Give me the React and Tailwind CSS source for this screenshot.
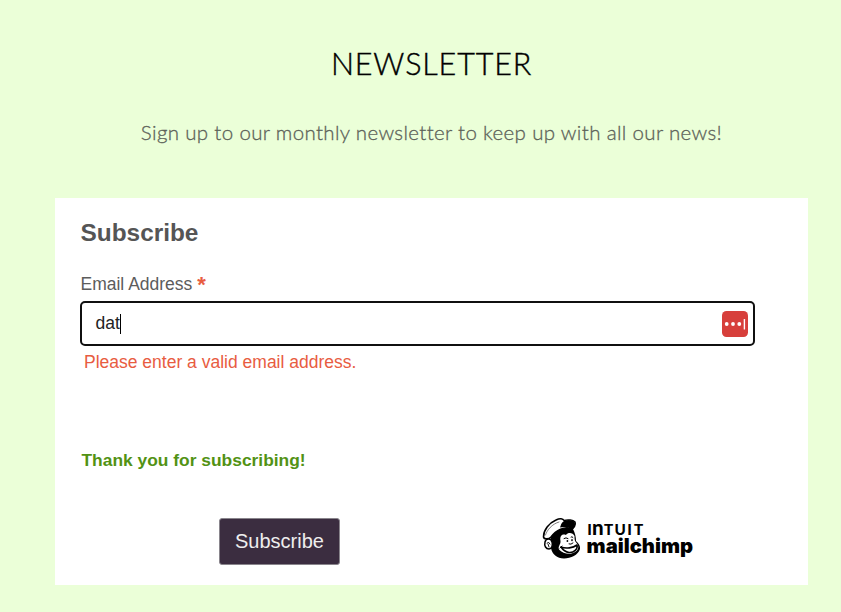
function Freddie() {
  return (
    <svg className="block h-[44px] w-[42px] shrink-0" viewBox="0 0 42 44" fill="none" strokeLinecap="round" strokeLinejoin="round">
      <path d="M12 18C14 13 19 10 25 11L32 13C34 17 35 21 35 25C38 28 39.5 30 39 33C37 39 30 42.5 23 42.5C16 42.5 11 38 10 32C8 28 9 22 12 18Z" fill="#000" />
      <path d="M19.5 25C18.5 20 21 17.5 25 19C27 16 32 16.5 33.5 20C33.5 23 33.5 25 35.5 27C38.5 30 37.5 34 34 36C30 39 22 38 18.5 34C16 31 20 28.5 19.5 25Z" fill="#fff" />
      <path d="M2.5 21C2.5 14 8 7 15 4C19 2 22 2.5 23 4.5C27 3.5 32 4 34 6C35 9 33 12.5 30 12.5C24 10 15 14 10 21C8 23.5 3 23.5 2.5 21Z" fill="#fff" stroke="#000" strokeWidth="1.6" />
      <path d="M23 5C27 3 32 4 33.5 6C35 9 33 13.5 31 13.5C27 10.5 23 10.5 19 11.5C20 9 20 7 23 5Z" fill="#000" />
      <path d="M4.5 19C6 14 11 8 18 6" stroke="#000" strokeWidth=".5" />
      <path d="M4 26C5 22 10 22 11 26C12 29 11 33 8 33C5 33 3 30 4 26Z" fill="#fff" stroke="#000" strokeWidth="1.5" />
      <path d="M6 27Q8 25 9 28M7 28L8 31" stroke="#000" strokeWidth=".9" />
      <path d="M23 22.5Q25 21 27 22.5M30 21Q31 20 32 21.5" stroke="#000" strokeWidth="1" />
      <ellipse cx="26.4" cy="25" rx=".9" ry="1.1" fill="#000" />
      <ellipse cx="31" cy="24.2" rx=".8" ry="1.1" fill="#000" />
      <path d="M28 28Q30 29 32 27" stroke="#000" strokeWidth="1" />
      <path d="M20 31C25 33 32 32 36 29C37 33 33 37 28 36.5C24 36 22 34 20 31Z" fill="#fff" stroke="#000" strokeWidth="1.6" />
      <path d="M19 32L21 30" stroke="#000" strokeWidth="1" />
    </svg>
  );
}

function MailchimpLogo() {
  return (
    <div className="flex">
      <Freddie />
      <svg className="block h-[44px] w-[112px]" viewBox="583 516 112 44" fill="#000">
        <text y="534.5" fontFamily="Lato, sans-serif" fontWeight="900" fontSize="15.2">
          <tspan x="587.2">I</tspan>
          <tspan x="592" fontSize="20.5">n</tspan>
          <tspan x="604 614.4 627.3 634">TUIT</tspan>
        </text>
        <text x="586.6" y="552.6" fontFamily="Inter, sans-serif" fontWeight="900" fontSize="20.2" textLength="106.4" lengthAdjust="spacingAndGlyphs">mailchimp</text>
      </svg>
    </div>
  );
}

function PasswordBadge() {
  return (
    <svg className="block size-[26px]" viewBox="0 0 26 26">
      <rect width="26" height="26" rx="4.5" fill="#d73f3b" />
      <g fill="#fff">
        <circle cx="4.7" cy="13" r="1.9" />
        <circle cx="11" cy="13" r="1.9" />
        <circle cx="17.3" cy="13" r="1.9" />
        <rect x="21.7" y="8" width="1.4" height="10.5" rx=".5" />
      </g>
    </svg>
  );
}

export default function App() {
  return (
    <main className="flex h-[612px] w-[841px] flex-col overflow-hidden bg-[#ebffd8] pl-[55px] font-['Liberation_Sans',Arial,sans-serif]">
      <header className="w-[753px] pt-[43px] text-center font-[Lato,sans-serif]">
        <h1 className="h-[40px] text-[30.5px] leading-[40px] font-light tracking-[0.85px] whitespace-nowrap text-black [-webkit-text-stroke:0.4px_#000]">NEWSLETTER</h1>
        <p className="mt-[34px] h-[30px] text-[20.5px] leading-[30px] font-light tracking-[0.34px] whitespace-nowrap text-[#5c6258] [-webkit-text-stroke:0.3px_#5c6258] [font-variant-ligatures:none]">Sign up to our monthly newsletter to keep up with all our news!</p>
      </header>
      <form className="mt-[51px] h-[387px] w-[753px] bg-white pt-[19px] pl-[25px]" onSubmit={(e) => e.preventDefault()}>
        <h2 className="ml-[0.5px] h-[32px] text-[24.4px] leading-[32px] font-bold text-[#555]">Subscribe</h2>
        <div className="mt-[23px] ml-[0.5px] flex h-[24px] gap-[5px] text-[17.5px] leading-[24px] text-[#5c5c5c]">
          <label>Email Address</label>
          <span className="text-[22px] leading-[26px] font-bold text-[#e85c41]">*</span>
        </div>
        <div className="mt-[5px] flex h-[45px] w-[675px] items-center rounded-[5px] border-2 border-[#101010] pr-[5px] pl-[13.5px] text-[17.5px] text-[#222]">
          <span>dat</span>
          <span className="h-[20px] w-px bg-black" />
          <span className="ml-auto"><PasswordBadge /></span>
        </div>
        <p className="mt-[4px] ml-[4px] h-[24px] text-[17.5px] leading-[24px] text-[#e85c41]">Please enter a valid email address.</p>
        <p className="mt-[74px] ml-[1.5px] h-[24px] text-[17.4px] leading-[24px] font-bold text-[#529214]">Thank you for subscribing!</p>
        <div className="mt-[44px] flex items-start pl-[139px]">
          <button className="mt-[2px] h-[47px] w-[121px] rounded-[3px] border border-[#89858c] bg-[#3b2d40] pb-[2px] text-[20px] text-[#eee]">Subscribe</button>
          <div className="ml-[201px]"><MailchimpLogo /></div>
        </div>
      </form>
    </main>
  );
}
